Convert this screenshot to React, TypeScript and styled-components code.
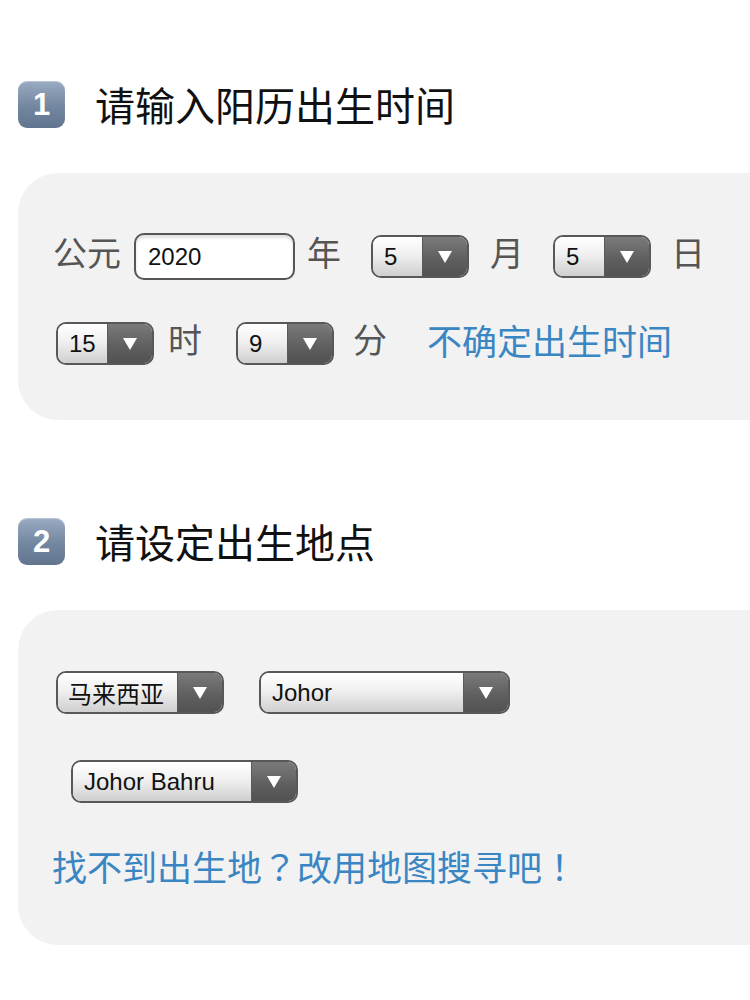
import styled, { createGlobalStyle } from 'styled-components';

const GlobalStyle = createGlobalStyle`
    html, body {
        margin: 0;
        padding: 0;
        background: #fff;
    }

    body {
        font-family: "Liberation Sans", "Noto Sans CJK SC", sans-serif;
    }
`;

const Page = styled.div`
    padding-top: 81px;
    padding-left: 18px;
`;

const SectionHead = styled.div<{ $mt?: number }>`
    display: flex;
    align-items: center;
    height: 47px;
    margin-top: ${p => p.$mt ?? 0}px;
`;

const Badge = styled.div`
    width: 47px;
    height: 47px;
    border-radius: 9px;
    background: linear-gradient(#9aabc2, #72869f 55%, #62758f);
    box-shadow: inset 0 1px 1px rgba(255, 255, 255, 0.35);
    display: flex;
    align-items: center;
    justify-content: center;
    color: #fff;
    font-family: "Liberation Sans", sans-serif;
    font-weight: bold;
    font-size: 31px;
`;

const Title = styled.h2`
    margin: 0 0 0 30px;
    font-family: "Noto Sans CJK SC", sans-serif;
    font-weight: 400;
    font-size: 40px;
    line-height: 47px;
    color: #111;
`;

const Panel = styled.div<{ $pt: number; $pb: number }>`
    margin-top: 45px;
    background: #f2f2f2;
    border-radius: 40px 0 0 40px;
    padding: ${p => p.$pt}px 0 ${p => p.$pb}px 38px;
    display: flex;
    flex-direction: column;
`;

const Row = styled.div<{ $mt?: number; $ml?: number }>`
    display: flex;
    align-items: center;
    margin-top: ${p => p.$mt ?? 0}px;
    margin-left: ${p => p.$ml ?? 0}px;
`;

// labels sit a few pixels above the centre of the boxes beside them
const Label = styled.span<{ $ml?: number; $mr?: number }>`
    font-family: "Noto Sans CJK SC", sans-serif;
    font-size: 34px;
    line-height: 43px;
    color: #555;
    margin: -10px ${p => p.$mr ?? 0}px 0 ${p => p.$ml ?? 0}px;
`;

const YearInput = styled.div`
    box-sizing: border-box;
    width: 161px;
    height: 47px;
    border: 2px solid #565656;
    border-radius: 10px;
    background: #fff;
    box-shadow: inset 0 3px 3px rgba(0, 0, 0, 0.12);
    display: flex;
    align-items: center;
    padding-left: 12px;
    font-size: 24px;
    color: #111;
`;

const Select = styled.div<{ $w: number; $ml?: number }>`
    box-sizing: border-box;
    width: ${p => p.$w}px;
    height: 43px;
    margin-left: ${p => p.$ml ?? 0}px;
    border: 2px solid #585858;
    border-radius: 10px;
    overflow: hidden;
    display: flex;
    flex-shrink: 0;
`;

const SelectValue = styled.div<{ $cjk?: boolean }>`
    flex: 1;
    display: flex;
    align-items: center;
    padding-left: ${p => (p.$cjk ? 10 : 11)}px;
    background: linear-gradient(#ffffff, #f0f0f0 45%, #cfcfcf);
    font-family: ${p => (p.$cjk ? '"Noto Sans CJK SC", sans-serif' : '"Liberation Sans", sans-serif')};
    font-size: 24px;
    color: #111;
    white-space: nowrap;
`;

const SelectArrow = styled.div`
    width: 44px;
    background: linear-gradient(#7a7a7a, #5e5e5e 60%, #525252);
    border-left: 1px solid #5a5a5a;
    display: flex;
    align-items: center;
    justify-content: center;

    &::after {
        content: "";
        width: 0;
        height: 0;
        border-left: 7px solid transparent;
        border-right: 7px solid transparent;
        border-top: 12px solid #fff;
    }
`;

const Link = styled.a<{ $ml?: number; $lift?: number }>`
    font-family: "Noto Sans CJK TC", "Noto Sans CJK SC", sans-serif;
    font-size: 35px;
    line-height: 43px;
    color: #3a86c3;
    text-decoration: none;
    margin-top: ${p => -(p.$lift ?? 0) * 2}px;
    margin-left: ${p => p.$ml ?? 0}px;
    white-space: nowrap;
`;

type DropProps = { value: string; w: number; ml?: number; cjk?: boolean };

const Dropdown = ({ value, w, ml, cjk }: DropProps) => (
    <Select $w={w} $ml={ml}>
        <SelectValue $cjk={cjk}>{value}</SelectValue>
        <SelectArrow />
    </Select>
);

export default function App() {
    return (
        <Page>
            <GlobalStyle />
            <SectionHead>
                <Badge>1</Badge>
                <Title>请输入阳历出生时间</Title>
            </SectionHead>
            <Panel $pt={60} $pb={55}>
                <Row $ml={-3}>
                    <Label $mr={13}>公元</Label>
                    <YearInput>2020</YearInput>
                    <Label $ml={12} $mr={30}>年</Label>
                    <Dropdown value="5" w={98} />
                    <Label $ml={21} $mr={29}>月</Label>
                    <Dropdown value="5" w={98} />
                    <Label $ml={20}>日</Label>
                </Row>
                <Row $mt={42}>
                    <Dropdown value="15" w={98} />
                    <Label $ml={14} $mr={34}>时</Label>
                    <Dropdown value="9" w={98} />
                    <Label $ml={19}>分</Label>
                    <Link $ml={40} $lift={4}>不确定出生时间</Link>
                </Row>
            </Panel>

            <SectionHead $mt={98}>
                <Badge>2</Badge>
                <Title>请设定出生地点</Title>
            </SectionHead>
            <Panel $pt={61} $pb={58}>
                <Row>
                    <Dropdown value="马来西亚" w={168} cjk />
                    <Dropdown value="Johor" w={251} ml={35} />
                </Row>
                <Row $mt={46} $ml={15}>
                    <Dropdown value="Johor Bahru" w={227} />
                </Row>
                <Row $mt={41} $ml={-4}>
                    <Link>找不到出生地？改用地图搜寻吧！</Link>
                </Row>
            </Panel>
        </Page>
    );
}
